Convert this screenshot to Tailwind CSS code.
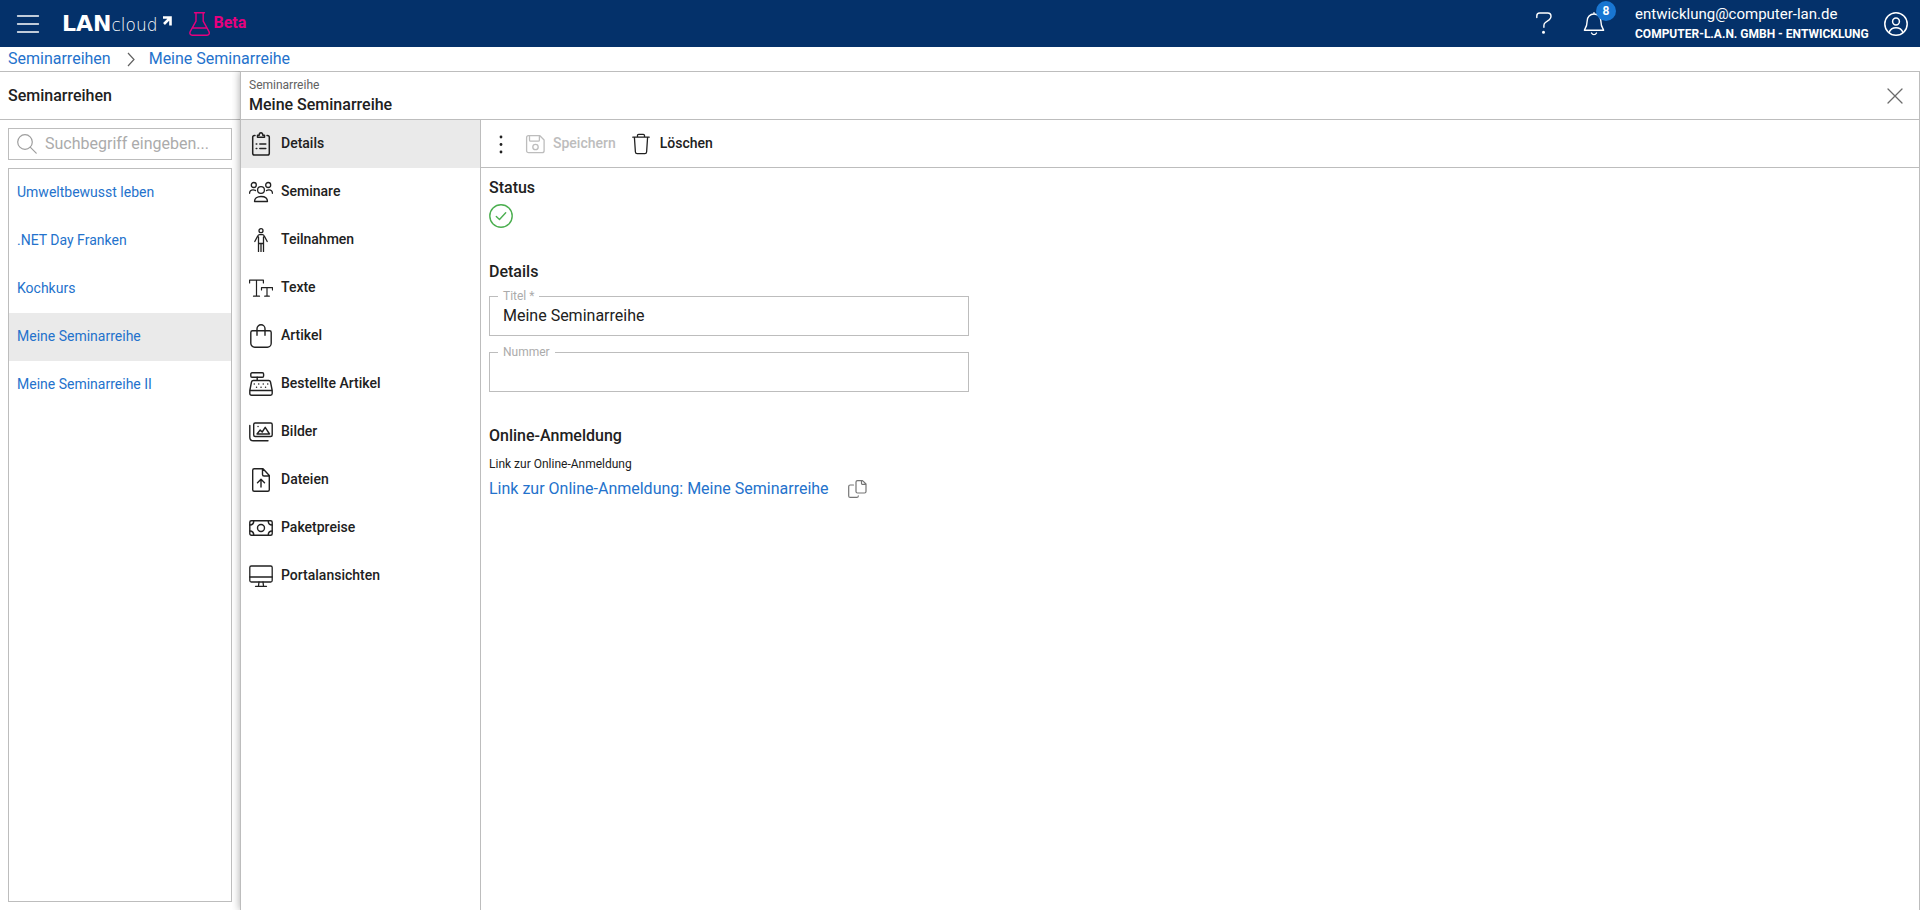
<!DOCTYPE html>
<html lang="de">
<head>
<meta charset="utf-8">
<meta name="viewport" content="width=device-width, initial-scale=1">
<title>LANcloud – Meine Seminarreihe</title>
<script src="https://cdn.jsdelivr.net/npm/@tailwindcss/browser@4"></script>
</head>
<body class="flex h-screen flex-col overflow-hidden bg-white font-[Roboto,sans-serif] text-[#212121]">

<header class="flex h-[47px] shrink-0 items-center bg-[#04316a] pl-4 pr-3 text-white">
  <button type="button" aria-label="Menü" class="flex size-6 items-center justify-center">
    <svg class="size-6" viewBox="0 0 24 24" fill="none" stroke="currentColor" stroke-width="1.3" stroke-linecap="round"><path d="M1.5 4h21M1.5 12h21M1.5 20h21"/></svg>
  </button>
  <a href="#" aria-label="LANcloud" class="ml-[22px] flex items-baseline pt-0.5 font-['DejaVu_Sans',sans-serif] leading-6">
    <span class="text-[22px] font-bold">LAN</span>
    <span class="text-[17px] font-extralight">cloud</span>
    <svg class="ml-1 mt-1 size-[10px] self-start" viewBox="0 0 10 10" fill="none" stroke="currentColor" stroke-width="2.6"><path d="M1 1.500h7.500V9.500M8 2L2 8"/></svg>
  </a>
  <div class="ml-4 flex items-center gap-0.5 text-[#e6007e]">
    <svg class="size-6" viewBox="0 0 24 24" fill="none" stroke="currentColor" stroke-width="1.4" stroke-linecap="round" stroke-linejoin="round"><path d="M6.500.8h10M8 .8v8.400L2.200 19.600c-1 2 .2 3.600 2 3.600h14.800c1.800 0 3-1.600 2-3.600L15.200 9.200V.8M5 16h13.300"/></svg>
    <span class="pb-0.5 text-base font-bold">Beta</span>
  </div>
  <div class="ml-auto flex items-center">
    <button type="button" aria-label="Hilfe" class="mr-[26px] flex size-6 items-center justify-center">
      <svg class="size-6" viewBox="0 0 24 24" fill="none" stroke="currentColor" stroke-width="1.4" stroke-linecap="round" stroke-linejoin="round"><path d="M4.800 5.500V4c0-1.700 1.200-3 2.900-3h8c1.900 0 3.300 1.400 3.300 3.200 0 1.500-.6 2.600-1.600 3.400l-4 2.900c-1 .8-1.500 1.700-1.500 3v1.700"/><circle cx="11.500" cy="20.300" r=".8" fill="currentColor"/></svg>
    </button>
    <button type="button" aria-label="Benachrichtigungen, 8 neu" class="relative mr-[29px] flex size-6 items-center justify-center">
      <svg class="size-6" viewBox="0 0 24 24" fill="none" stroke="currentColor" stroke-width="1.4" stroke-linecap="round" stroke-linejoin="round"><path d="M12 2V.8M12 2C8 2 5.200 5 5.200 8.800c0 5-1.200 6.800-2.800 9.400h19.200c-1.600-2.600-2.800-4.400-2.800-9.400C18.800 5 16 2 12 2zM9.500 21c.6 1.100 1.500 1.600 2.500 1.600s1.900-.5 2.500-1.600"/></svg>
      <span class="absolute -top-[11px] left-[14px] flex size-5 items-center justify-center rounded-full bg-[#1976d2] text-xs font-bold">8</span>
    </button>
    <div class="mr-2 min-w-[241px] leading-5">
      <div class="text-[15px]">entwicklung@computer-lan.de</div>
      <div class="text-xs leading-5 font-bold">COMPUTER-L.A.N. GMBH - ENTWICKLUNG</div>
    </div>
    <button type="button" aria-label="Konto" class="size-6">
      <svg class="size-6" viewBox="0 0 24 24" fill="none" stroke="currentColor" stroke-width="1.500" stroke-linecap="round"><circle cx="12" cy="12" r="11.200"/><circle cx="12" cy="9.500" r="3.400"/><path d="M5 20.500c1.300-3.400 3.800-4.800 7-4.800s5.700 1.400 7 4.800"/></svg>
    </button>
  </div>
</header>

<nav aria-label="Brotkrumen" class="flex h-6 shrink-0 items-center px-2 text-base text-[#2472cc]">
  <a href="#">Seminarreihen</a>
  <svg class="ml-3 mr-2.5 size-4 text-[#616161]" viewBox="0 0 16 16" fill="none" stroke="currentColor" stroke-width="1.200"><path d="M5 2l6 6.500L5 15"/></svg>
  <a href="#">Meine Seminarreihe</a>
</nav>

<div class="flex min-h-0 flex-1">
  <aside class="flex w-60 shrink-0 flex-col border-t border-[#bdbdbd]">
    <h2 class="flex h-12 shrink-0 items-center border-b border-[#bdbdbd] px-2 text-base font-medium">Seminarreihen</h2>
    <div class="flex min-h-0 flex-1 flex-col gap-2 p-2">
      <label class="flex h-8 shrink-0 items-center gap-2 border border-[#bdbdbd] px-2 text-[#9e9e9e]">
        <svg class="size-5 shrink-0" viewBox="0 0 20 20" fill="none" stroke="currentColor" stroke-width="1.200" stroke-linecap="round"><circle cx="8" cy="8" r="7.300"/><path d="M13.200 13.200l6 6"/></svg>
        <input type="search" aria-label="Suche" placeholder="Suchbegriff eingeben..." class="w-full min-w-0 text-base text-[#212121] outline-none placeholder:text-[#ababab]">
      </label>
      <ul class="flex-1 border border-[#bdbdbd] text-sm text-[#2472cc]">
        <li><a href="#" class="flex h-12 items-center px-2 pb-0.5">Umweltbewusst leben</a></li>
        <li><a href="#" class="flex h-12 items-center px-2 pb-0.5">.NET Day Franken</a></li>
        <li><a href="#" class="flex h-12 items-center px-2 pb-0.5">Kochkurs</a></li>
        <li><a href="#" aria-current="true" class="flex h-12 items-center bg-[#eaeaea] px-2 pb-0.5">Meine Seminarreihe</a></li>
        <li><a href="#" class="flex h-12 items-center px-2 pb-0.5">Meine Seminarreihe II</a></li>
      </ul>
    </div>
  </aside>

  <main class="flex min-w-0 flex-1 flex-col border-x border-t border-[#bdbdbd] bg-white shadow-[0_0_8px_rgba(0,0,0,0.35)] [clip-path:inset(0_0_0_-8px)]">
    <div class="flex h-12 shrink-0 items-center justify-between border-b border-[#bdbdbd] pl-2 pr-3">
      <div class="pt-0.5">
        <p class="text-xs leading-4 text-[#616161]">Seminarreihe</p>
        <h1 class="text-base leading-6 font-medium">Meine Seminarreihe</h1>
      </div>
      <button type="button" aria-label="Schließen" class="flex size-6 items-center justify-center text-[#6b6b6b]">
        <svg class="size-4" viewBox="0 0 16 16" fill="none" stroke="currentColor" stroke-width="1.300" stroke-linecap="round"><path d="M1 1l14 14M15 1L1 15"/></svg>
      </button>
    </div>
    <div class="flex min-h-0 flex-1">
      <nav aria-label="Bereiche" class="w-60 shrink-0 border-r border-[#bdbdbd] text-sm font-medium">
        <a href="#" aria-current="page" class="flex h-12 items-center gap-2 bg-[#eaeaea] px-2">
          <svg class="size-6" viewBox="0 0 24 24" fill="none" stroke="currentColor" stroke-width="1.500" stroke-linecap="round" stroke-linejoin="round"><path d="M6 3.500H5.500c-1 0-1.800.8-1.800 1.800v16c0 1 .8 1.800 1.800 1.800h13c1 0 1.800-.8 1.800-1.800v-16c0-1-.8-1.800-1.800-1.800H18M8.500 5.200h7v-2h-1.700c0-1.300-.7-2.400-1.800-2.400s-1.800 1.100-1.800 2.400H8.500zM10.800 12h6M10.800 16.500h6M7.200 12h.6M7.200 16.500h.6"/></svg>
          <span class="pb-0.5">Details</span></a>
        <a href="#" class="flex h-12 items-center gap-2 px-2">
          <svg class="size-6" viewBox="0 0 24 24" fill="none" stroke="currentColor" stroke-width="1.300" stroke-linecap="round" stroke-linejoin="round"><circle cx="4.800" cy="5" r="2.500"/><circle cx="19.200" cy="5" r="2.500"/><circle cx="12" cy="10" r="3.400"/><path d="M.6 13.300c0-2 1.400-3.500 3.400-3.500 1 0 1.900.3 2.500.8M23.400 13.300c0-2-1.400-3.500-3.400-3.500-1 0-1.900.3-2.500.8M5.500 21.500h13c0-3-2.600-5-6.500-5s-6.500 2-6.500 5z"/></svg>
          <span class="pb-0.5">Seminare</span></a>
        <a href="#" class="flex h-12 items-center gap-2 px-2">
          <svg class="size-6" viewBox="0 0 24 24" fill="none" stroke="currentColor" stroke-width="1.300" stroke-linecap="round" stroke-linejoin="round"><circle cx="12" cy="2.700" r="2"/><path d="M5.800 13.500L8.700 8c.4-.9 1-1.300 1.900-1.300h2.800c.9 0 1.500.4 1.900 1.300l2.900 5.500M9.500 9v14.400M14.500 9v14.400M12 16v7.400M9.500 15.500h5"/></svg>
          <span class="pb-0.5">Teilnahmen</span></a>
        <a href="#" class="flex h-12 items-center gap-2 px-2">
          <svg class="size-6" viewBox="0 0 24 24" fill="none" stroke="currentColor" stroke-width="1.200" stroke-linecap="round" stroke-linejoin="round"><path d="M.6 7V4.200h13.800V7M7.500 4.200v16M4.500 20.200h6M12.500 14v-2.300h11V14M18 11.700v8.500M15.700 20.200h4.600"/></svg>
          <span class="pb-0.5">Texte</span></a>
        <a href="#" class="flex h-12 items-center gap-2 px-2">
          <svg class="size-6" viewBox="0 0 24 24" fill="none" stroke="currentColor" stroke-width="1.400" stroke-linecap="round" stroke-linejoin="round"><path d="M3.500 6.700h17c1 0 1.700.7 1.700 1.700v10.900c0 2.200-1.700 3.900-3.900 3.900H5.700c-2.200 0-3.900-1.700-3.900-3.900V8.400c0-1 .7-1.700 1.700-1.700zM8 11.300V4.700c0-2.200 1.800-3.900 4-3.900s4 1.700 4 3.900v6.600"/></svg>
          <span class="pb-0.5">Artikel</span></a>
        <a href="#" class="flex h-12 items-center gap-2 px-2">
          <svg class="size-6" viewBox="0 0 24 24" fill="none" stroke="currentColor" stroke-width="1.400" stroke-linecap="round" stroke-linejoin="round"><rect x="1.800" y=".8" width="12.800" height="4.400" rx="1.200"/><path d="M8.200 5.200v3.300M.8 18.500L2.500 10c.2-.9.900-1.500 1.800-1.500h15.400c.9 0 1.600.6 1.800 1.500l1.700 8.500v3c0 1-.7 1.700-1.700 1.700h-19c-1 0-1.700-.7-1.700-1.700zM.8 18.500h22.400M5.200 12h.1M9.700 12h.1M14.200 12h.1M18.700 12h.1M7.500 15.300h.1M12 15.300h.1M16.500 15.300h.1"/></svg>
          <span class="pb-0.5">Bestellte Artikel</span></a>
        <a href="#" class="flex h-12 items-center gap-2 px-2">
          <svg class="size-6" viewBox="0 0 24 24" fill="none" stroke="currentColor" stroke-width="1.400" stroke-linecap="round" stroke-linejoin="round"><rect x="4.700" y="3" width="18.500" height="13.500" rx="1.500"/><path d="M.8 5.500v11.700c0 2 1.500 3.500 3.500 3.500H19M8 14l3.200-4 2 2 3-4.700L20.500 14zM9 6.500h.1"/></svg>
          <span class="pb-0.5">Bilder</span></a>
        <a href="#" class="flex h-12 items-center gap-2 px-2">
          <svg class="size-6" viewBox="0 0 24 24" fill="none" stroke="currentColor" stroke-width="1.400" stroke-linecap="round" stroke-linejoin="round"><path d="M14 .8H5.200c-.9 0-1.500.6-1.500 1.500v19.400c0 .9.600 1.500 1.500 1.500h13.600c.9 0 1.500-.6 1.500-1.500V7.500zM13.500.8v5.700c0 .9.600 1.500 1.500 1.500h5.300M12 19v-7.500M8.500 14.800L12 11.300l3.500 3.500"/></svg>
          <span class="pb-0.5">Dateien</span></a>
        <a href="#" class="flex h-12 items-center gap-2 px-2">
          <svg class="size-6" viewBox="0 0 24 24" fill="none" stroke="currentColor" stroke-width="1.400" stroke-linecap="round" stroke-linejoin="round"><rect x=".8" y="4.700" width="22.400" height="14.600" rx="1.500"/><circle cx="12" cy="12" r="3.500"/><path d="M.8 9c2.500 0 4-1.700 4-4.300M23.200 9c-2.500 0-4-1.700-4-4.300M.8 15c2.500 0 4 1.700 4 4.300M23.200 15c-2.500 0-4 1.700-4 4.300"/></svg>
          <span class="pb-0.5">Paketpreise</span></a>
        <a href="#" class="flex h-12 items-center gap-2 px-2">
          <svg class="size-6" viewBox="0 0 24 24" fill="none" stroke="currentColor" stroke-width="1.300" stroke-linecap="round" stroke-linejoin="round"><rect x=".8" y="2" width="22.400" height="16" rx="1.500"/><path d="M.8 13h22.400M10 18l-.5 4M14 18l.5 4M6.500 22.300h11"/></svg>
          <span class="pb-0.5">Portalansichten</span></a>
      </nav>

      <section class="min-w-0 flex-1">
        <div class="flex h-12 items-center border-b border-[#bdbdbd] px-2 text-sm font-medium">
          <button type="button" aria-label="Weitere Aktionen" class="size-6">
            <svg class="size-6" viewBox="0 0 24 24" fill="currentColor"><circle cx="12" cy="5" r="1.400"/><circle cx="12" cy="12.500" r="1.400"/><circle cx="12" cy="20" r="1.400"/></svg>
          </button>
          <button type="button" disabled class="ml-[11px] flex items-center gap-[7px] text-[#bdbdbd]">
            <svg class="size-[22px]" viewBox="0 0 22 22" fill="none" stroke="currentColor" stroke-width="1.300" stroke-linejoin="round"><path d="M4.600 2.700h11.300l4.200 4.300v10.700c0 1.200-.8 2-2 2H4.600c-1.200 0-2-.8-2-2v-13c0-1.200.8-2 2-2zM5.500 2.700V7c0 .8.500 1.200 1.200 1.200h7.500c.7 0 1.200-.4 1.200-1.200V2.700"/><circle cx="11.500" cy="14" r="2.700"/></svg>
            <span class="pb-0.5">Speichern</span></button>
          <button type="button" class="ml-3.5 flex items-center gap-2">
            <svg class="size-[22px]" viewBox="0 0 22 22" fill="none" stroke="currentColor" stroke-width="1.300" stroke-linecap="round" stroke-linejoin="round"><path d="M2.800 4.200h16.400M7.500 4V2.500c0-.7.400-1.200 1.200-1.200h4.600c.8 0 1.200.5 1.200 1.200V4M4.400 4.200l1 14.800c.1 1 .7 1.600 1.700 1.600h7.800c1 0 1.600-.6 1.700-1.600l1-14.800"/></svg>
            <span class="pb-0.5">Löschen</span></button>
        </div>

        <div class="flex max-w-[496px] flex-col px-2 pt-2">
          <h2 class="text-base font-medium">Status</h2>
          <svg role="img" aria-label="Aktiv" class="mt-1 size-6 text-[#4caf50]" viewBox="0 0 24 24" fill="none" stroke="currentColor" stroke-width="1.400" stroke-linecap="round" stroke-linejoin="round"><circle cx="12" cy="12" r="11.200"/><path d="M7.300 12.500l3.200 3 6.200-6.700"/></svg>

          <h2 class="mt-8 text-base font-medium">Details</h2>
          <div class="relative mt-3">
            <label for="titel" class="absolute -top-2 left-[9px] bg-white px-[5px] text-xs leading-4 text-[#ababab]">Titel *</label>
            <input id="titel" type="text" value="Meine Seminarreihe" class="h-10 w-full border border-[#bdbdbd] px-[13px] pb-0.5 text-base outline-none">
          </div>
          <div class="relative mt-4">
            <label for="nummer" class="absolute -top-2 left-[9px] bg-white px-[5px] text-xs leading-4 text-[#ababab]">Nummer</label>
            <input id="nummer" type="text" class="h-10 w-full border border-[#bdbdbd] px-[13px] pb-0.5 text-base outline-none">
          </div>

          <h2 class="mt-8 text-base font-medium">Online-Anmeldung</h2>
          <p class="mt-2 text-xs leading-4">Link zur Online-Anmeldung</p>
          <div class="mt-[5px] flex items-center gap-[18px]">
            <a href="#" class="text-base text-[#2472cc]">Link zur Online-Anmeldung: Meine Seminarreihe</a>
            <button type="button" aria-label="Link kopieren" class="text-[#757575]">
              <svg class="size-5" viewBox="0 0 20 20" fill="none" stroke="currentColor" stroke-width="1.200" stroke-linecap="round" stroke-linejoin="round"><path d="M15.500 1.600h-5c-.9 0-1.500.6-1.500 1.500v9.400c0 .9.600 1.500 1.500 1.500h7c.9 0 1.500-.6 1.500-1.500V5zM14.500 1.600v3c0 .5.300.8.800.8h3.500M6.500 6H3.200c-.9 0-1.500.6-1.500 1.500v9.400c0 .9.600 1.500 1.500 1.500h6.600c.9 0 1.500-.6 1.500-1.500"/></svg>
            </button>
          </div>
        </div>
      </section>
    </div>
  </main>
</div>
</body>
</html>
